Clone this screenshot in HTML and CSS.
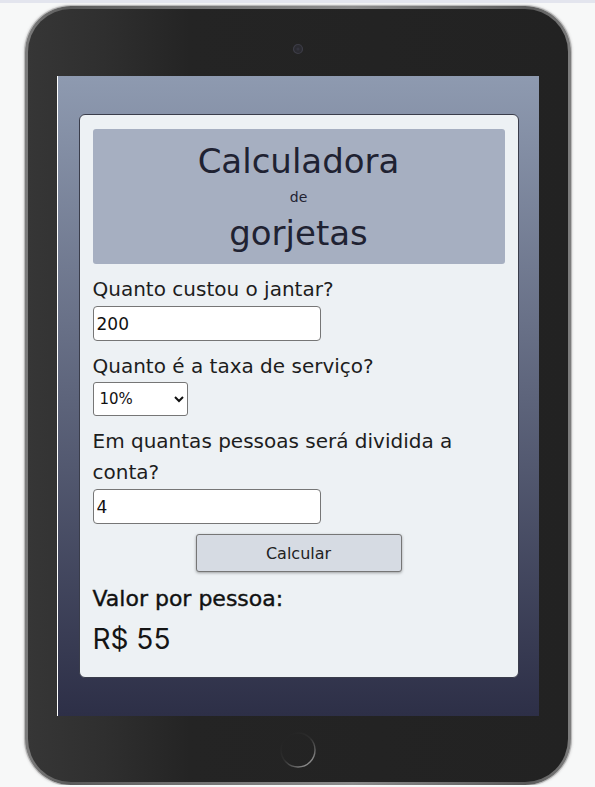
FILE: index.html
```html
<!DOCTYPE html>
<html lang="pt-BR">
<head>
<meta charset="utf-8">
<title>Calculadora de gorjetas</title>
<link rel="stylesheet" href="styles.css">
</head>
<body>
<div class="topstrip"></div>
<div class="tablet">
  <div class="tablet-body">
    <div class="bezel-top">
      <svg class="camera" width="12" height="12" viewBox="0 0 12 12">
        <circle cx="6" cy="6" r="4.5" fill="#2b2b31" stroke="#3d3d47" stroke-width="1.2"/>
        <circle cx="6" cy="6" r="1.6" fill="#34343e"/>
      </svg>
    </div>
    <div class="screen">
      <main class="card">
        <header class="title-box">
          <h1 class="title">Calculadora</h1>
          <p class="title-small">de</p>
          <p class="title">gorjetas</p>
        </header>
        <form class="form">
          <div class="field">
            <label class="label" for="valor">Quanto custou o jantar?</label>
            <input class="text-input" id="valor" type="text" value="200">
          </div>
          <div class="field">
            <label class="label" for="taxa">Quanto é a taxa de serviço?</label>
            <select class="select" id="taxa">
              <option>10%</option>
              <option>15%</option>
              <option>20%</option>
            </select>
          </div>
          <div class="field">
            <label class="label" for="pessoas">Em quantas pessoas será dividida a conta?</label>
            <input class="text-input" id="pessoas" type="text" value="4">
          </div>
          <button class="btn" type="button">Calcular</button>
        </form>
        <h2 class="result-title">Valor por pessoa:</h2>
        <p class="result-value">R$ 55</p>
      </main>
    </div>
    <div class="bezel-bottom">
      <svg class="home" width="40" height="40" viewBox="0 0 40 40">
        <defs>
          <linearGradient id="hg" x1="0.15" y1="0.1" x2="0.85" y2="0.95">
            <stop offset="0" stop-color="#232323"/>
            <stop offset="0.45" stop-color="#2e2e2e"/>
            <stop offset="0.75" stop-color="#5e5e5e"/>
            <stop offset="1" stop-color="#9a9a9a"/>
          </linearGradient>
        </defs>
        <circle cx="20" cy="20" r="17" fill="none" stroke="url(#hg)" stroke-width="1.4"/>
      </svg>
    </div>
  </div>
</div>
</body>
</html>
```
FILE: styles.css
```css
* { box-sizing: border-box; }

html, body {
  margin: 0;
  padding: 0;
  background: #f7f8f8;
  font-family: "DejaVu Sans", sans-serif;
}

.topstrip {
  height: 3px;
  background: #e3e5ee;
}

.tablet {
  width: 546px;
  height: 779px;
  margin: 3px 0 0 25px;
  padding: 3px;
  border-radius: 46px;
  background: linear-gradient(90deg, #7d7d7d 0%, #5a5a5a 8%, #6e6e6e 25%, #8c8c8c 60%, #5a5a5a 92%, #7d7d7d 100%);
  box-shadow: 0 0 0 1px #b9b9b9, 0 0 2px 2px #e2e2e2;
}

.tablet-body {
  height: 100%;
  border-radius: 43px;
  background: linear-gradient(90deg, #363636 0%, #2f2f2f 14%, #242424 30%, #222222 100%);
  display: flex;
  flex-direction: column;
}

.bezel-top {
  height: 67px;
  display: flex;
  justify-content: center;
  align-items: flex-start;
  padding-top: 34px;
}

.camera { display: block; }

.screen {
  height: 640px;
  margin: 0 29px;
  border-left: 1px solid #ffffff;
  background: linear-gradient(180deg, #8e9ab0 0%, #2d2f47 100%);
  padding-top: 38px;
}

.bezel-bottom {
  flex: 1;
  display: flex;
  justify-content: center;
  padding-top: 14px;
}

.home { display: block; }

.card {
  width: 440px;
  margin: 0 auto;
  background: #edf1f4;
  border: 1px solid #3a3d4b;
  border-radius: 6px;
  padding: 14px 13px 20px;
}

.title-box {
  background: #a6afc1;
  border-radius: 3px;
  padding: 12px 0 11px;
  text-align: center;
  color: #1f2232;
}

.title {
  margin: 0;
  font-size: 34px;
  font-weight: normal;
  line-height: 40px;
}

.title-small {
  margin: 0;
  font-size: 14px;
  line-height: 32px;
}

.form {
  display: flex;
  flex-direction: column;
  gap: 10px;
  margin-top: 10px;
}

.field {
  display: flex;
  flex-direction: column;
  align-items: flex-start;
}

.label {
  font-size: 20px;
  line-height: 31px;
  color: #1d1d1d;
}

.text-input {
  margin-top: 1px;
  width: 228px;
  height: 35px;
  padding: 0 3px;
  border: 1px solid #767676;
  border-radius: 4px;
  background: #ffffff;
  font-family: "DejaVu Sans", sans-serif;
  font-size: 17px;
  color: #111;
}

.select {
  width: 95px;
  height: 34px;
  padding: 0 2px;
  border: 1px solid #767676;
  border-radius: 3px;
  background-color: #ffffff;
  font-family: "DejaVu Sans", sans-serif;
  font-size: 15px;
  color: #111;
}

.btn {
  align-self: center;
  width: 206px;
  height: 38px;
  background: #d6dbe3;
  border: 1px solid #767676;
  border-radius: 3px;
  box-shadow: 0 1px 3px rgba(0, 0, 0, 0.35);
  font-family: "DejaVu Sans", sans-serif;
  font-size: 16px;
  color: #222;
}

.result-title {
  margin: 12px 0 0;
  font-size: 22px;
  font-weight: normal;
  line-height: 30px;
  color: #111;
  -webkit-text-stroke: 0.4px #111;
}

.result-value {
  margin: 7px 0 0;
  font-family: "Inter", sans-serif;
  font-size: 28px;
  line-height: 36px;
  color: #151515;
}
```
